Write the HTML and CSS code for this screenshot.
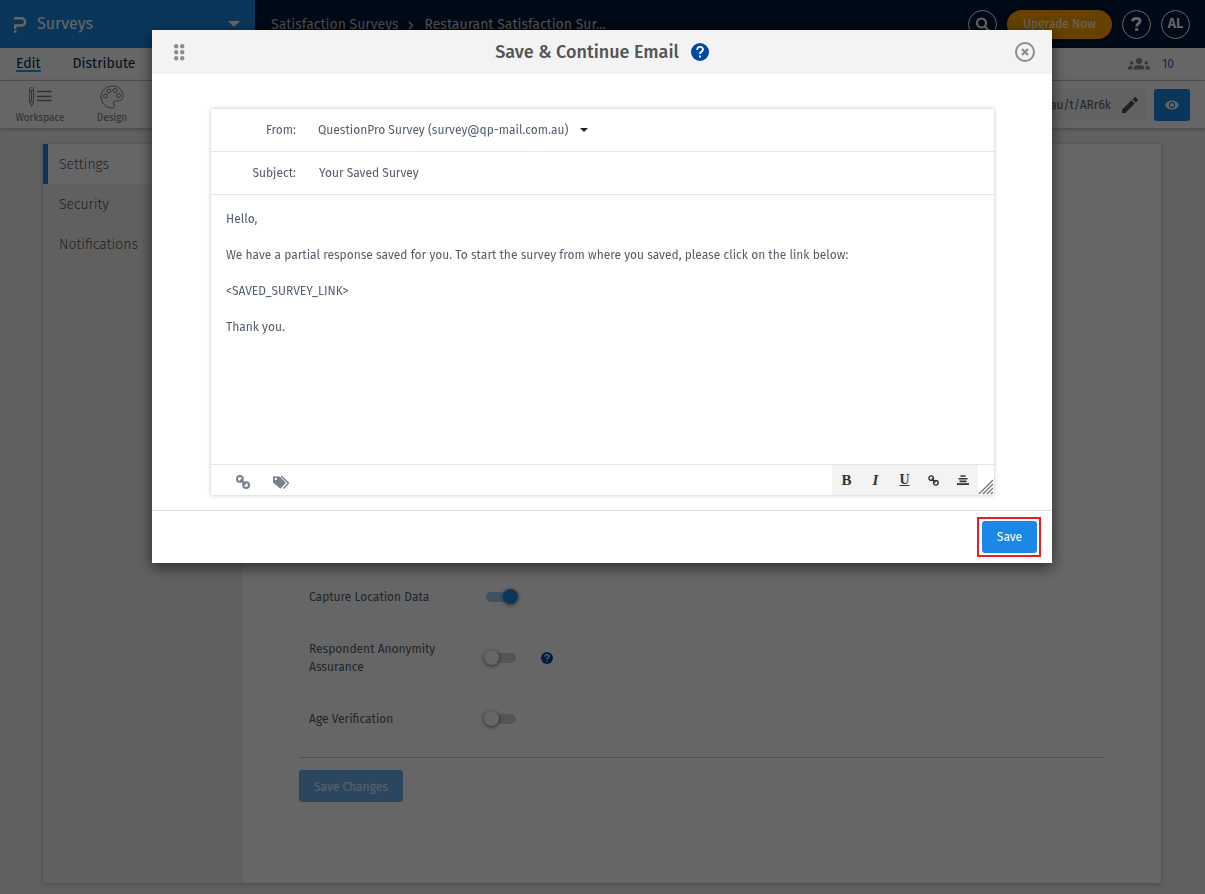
FILE: index.html
```html
<!DOCTYPE html>
<html lang="en">
<head>
    <meta charset="UTF-8">
    <meta name="viewport" content="width=device-width, initial-scale=1.0">
    <title>Surveys - Save &amp; Continue Email</title>
    <link rel="stylesheet" href="styles.css">
</head>
<body>
    <!-- Top bar -->
    <header class="topbar">
        <button class="product-switch" type="button">
            <svg class="logo" width="14" height="17" viewBox="0 0 14 17" fill="none" stroke="#fff" stroke-width="2.400">
                <path d="M1 2.200h7.500a3.300 3.300 0 0 1 0 7.300H2.200V13"/>
                <path d="M1 15.500h2.600"/>
            </svg>
            <span>Surveys</span>
            <svg class="caret" width="12" height="6" viewBox="0 0 12 6"><path d="M0 0h12L6 6z" fill="#fff"/></svg>
        </button>
        <nav class="breadcrumb">
            <a href="#">Satisfaction Surveys</a>
            <svg width="6" height="9" viewBox="0 0 6 9" fill="none" stroke="#c3c8cf" stroke-width="1.5"><path d="M1 1l3.5 3.5L1 8"/></svg>
            <span class="current">Restaurant Satisfaction Sur...</span>
        </nav>
        <div class="top-actions">
            <button class="round" type="button" aria-label="Search">
                <svg width="15" height="15" viewBox="0 0 15 15" fill="none" stroke="#fff"><circle cx="6.500" cy="6" r="4.500" stroke-width="2.200"/><path d="M9.700 9.200l4.300 4.800" stroke-width="2.400"/></svg>
            </button>
            <button class="upgrade" type="button">Upgrade Now</button>
            <button class="round" type="button" aria-label="Help">
                <svg width="11" height="14" viewBox="0 0 11 14" fill="none" stroke="#fff" stroke-width="2.8"><path d="M1.300 4.200C1.600 2.300 3 1.400 5.200 1.400c2.300 0 3.900 1 3.900 2.700 0 2.300-3.500 2.300-3.500 5.400"/><path d="M4.200 12.500h3"/></svg>
            </button>
            <button class="round" type="button">AL</button>
        </div>
    </header>

    <nav class="tabs">
        <a class="active" href="#">Edit</a>
        <a href="#">Distribute</a>
        <a class="viewers" href="#">
            <svg width="22" height="12" viewBox="0 0 22 12" fill="#8a8a8a"><circle cx="11" cy="3" r="3"/><path d="M5.500 11.500V10c0-2 2.500-3 5.500-3s5.500 1 5.500 3v1.500z"/><circle cx="3.700" cy="5" r="1.800"/><path d="M0 11.500V10c0-1.500 1.700-2.200 4.800-2.200-.6.700-.8 1.400-.8 3.700z"/><circle cx="18.300" cy="5" r="1.800"/><path d="M22 11.500V10c0-1.500-1.700-2.200-4.800-2.200.6.700.8 1.400.8 3.700z"/></svg>
            10
        </a>
    </nav>

    <div class="toolbar">
        <a class="tool" href="#">
            <svg width="24" height="24" viewBox="0 0 24 24" fill="none" stroke="#777d87"><path d="M1.500 4.500c0-1.500 1-2 2-2s2 .5 2 2V17l-2 4.500-2-4.500z M1.500 5.500h4 M1.500 17h4 M3.500 6v10"/><path d="M9 6.500h14.500M9 11.500h14.500M9 15.500h14.500" stroke-width="1.500"/></svg>
            Workspace
        </a>
        <a class="tool" href="#">
            <svg width="24" height="24" viewBox="0 0 24 24" fill="none" stroke="#777d87"><path d="M12.500 23C6 23 1 18 1 12S6 1 12.500 1C19 1 23 5.500 23 11c0 3.500-2.500 5-5 5h-2.500c-2 0-2.500 1.500-1.500 3s.5 4-1.500 4z"/><circle cx="5.500" cy="11" r="2"/><circle cx="9" cy="6" r="2"/><circle cx="15" cy="5.500" r="2"/><circle cx="18.500" cy="10.500" r="2"/></svg>
            Design
        </a>
        <div class="survey-link">
            <span>https://www.questionpro.com.au/t/ARr6k</span>
            <svg width="16" height="16" viewBox="0 0 16 16" fill="#50555e"><path d="M0 12.700 9.500 3.200l3.300 3.300L3.300 16H0z M10.500 2.200l1.700-1.700c.6-.6 1.200-.6 1.700 0l1.600 1.600c.6.600.6 1.200 0 1.700l-1.700 1.700z"/></svg>
        </div>
        <button class="preview" type="button" aria-label="Preview">
            <svg width="14" height="10" viewBox="0 0 14 10"><path d="M0 5c1.500-3 4-4.500 7-4.500S12.500 2 14 5c-1.500 3-4 4.500-7 4.500S1.500 8 0 5z" fill="#fff"/><circle cx="7" cy="5" r="2.600" fill="none" stroke="#1b87e6" stroke-width="1.200"/></svg>
        </button>
    </div>

    <!-- Survey settings page -->
    <div class="page">
        <aside class="sidebar">
            <a class="active" href="#">Settings</a>
            <a href="#">Security</a>
            <a href="#">Notifications</a>
        </aside>
        <main class="settings">
            <div class="option">
                <label for="location">Capture Location Data</label>
                <input class="toggle" type="checkbox" id="location" checked>
            </div>
            <div class="option">
                <label for="anonymity">Respondent Anonymity Assurance</label>
                <input class="toggle" type="checkbox" id="anonymity">
                <svg width="12" height="12" viewBox="0 0 18 18"><circle cx="9" cy="9" r="9" fill="#004a9f"/><path d="M6 7c0-4 6-4 6-.5C12 8.500 9 8.500 9 11M9 12.500v2" fill="none" stroke="#fff" stroke-width="1.800"/></svg>
            </div>
            <div class="option">
                <label for="age">Age Verification</label>
                <input class="toggle" type="checkbox" id="age">
            </div>
            <hr>
            <button class="save-changes" type="button">Save Changes</button>
        </main>
    </div>

    <!-- Email dialog -->
    <div class="overlay">
        <form class="modal" role="dialog" aria-labelledby="modal-title">
            <div class="modal-header">
                <svg class="drag" width="11" height="17" viewBox="0 0 11 17" fill="#8c8c8c"><circle cx="2.200" cy="2.200" r="2.200"/><circle cx="8.200" cy="2.200" r="2.200"/><circle cx="2.200" cy="8.200" r="2.200"/><circle cx="8.200" cy="8.200" r="2.200"/><circle cx="2.200" cy="14.200" r="2.200"/><circle cx="8.200" cy="14.200" r="2.200"/></svg>
                <h2 id="modal-title">Save &amp; Continue Email</h2>
                <svg width="18" height="18" viewBox="0 0 18 18"><circle cx="9" cy="9" r="9" fill="#004a9f"/><path d="M6.200 7c0-4 5.800-4 5.800-.5C12 8.500 9 8.500 9 11M9 12.500v2" fill="none" stroke="#fff" stroke-width="1.800"/></svg>
                <button class="close" type="button" aria-label="Close">
                    <svg width="20" height="20" viewBox="0 0 20 20" fill="none" stroke="#8c8c8c"><circle cx="10" cy="10" r="9" stroke-width="2"/><path d="M7 7l6 6M13 7l-6 6" stroke-width="2.200"/></svg>
                </button>
            </div>
            <div class="modal-body">
                <div class="email">
                    <div class="field">
                        <label for="from">From:</label>
                        <select id="from">
                            <option>QuestionPro Survey (survey@qp-mail.com.au)</option>
                        </select>
                        <svg width="8" height="4" viewBox="0 0 8 4"><path d="M0 0h8L4 4z" fill="#222"/></svg>
                    </div>
                    <div class="field">
                        <label for="subject">Subject:</label>
                        <input type="text" id="subject" value="Your Saved Survey">
                    </div>
                    <textarea class="message" aria-label="Message">Hello,

We have a partial response saved for you. To start the survey from where you saved, please click on the link below:

&lt;SAVED_SURVEY_LINK&gt;

Thank you.</textarea>
                    <div class="editor-bar">
                        <div class="inserts">
                            <button type="button" aria-label="Insert link">
                                <svg width="14" height="14" viewBox="0 0 14 14" fill="none" stroke="#76808f" stroke-width="2"><circle cx="3.900" cy="3.900" r="2.900"/><circle cx="10.100" cy="10.100" r="2.900"/><path d="M4.500 4.500l5 5"/></svg>
                            </button>
                            <button type="button" aria-label="Insert tag">
                                <svg width="17" height="13" viewBox="0 0 17 13"><path d="M0 .5h6.500l6.500 6.200-5.700 6L0 6.500z M2.800 1.800a1.200 1.200 0 1 0 .01 0z" fill="#76808f" fill-rule="evenodd"/><path d="M8 .8h1L15.500 7l-5 5.500" fill="none" stroke="#76808f" stroke-width="1.400"/></svg>
                            </button>
                        </div>
                        <div class="format">
                            <button class="bold" type="button">B</button>
                            <button class="italic" type="button">I</button>
                            <button class="underline" type="button">U</button>
                            <button type="button" aria-label="Link">
                                <svg width="11" height="11" viewBox="0 0 14 14" fill="none" stroke="#333" stroke-width="1.800"><circle cx="4" cy="4" r="2.900"/><circle cx="10" cy="10" r="2.900"/><path d="M4.500 4.500l5 5"/></svg>
                            </button>
                            <button type="button" aria-label="Align center">
                                <svg width="12" height="10" viewBox="0 0 12 10" stroke="#333" stroke-width="1.600"><path d="M3.500 1h5M1.500 3.700h9M2.500 6.400h7M0 9.100h12"/></svg>
                            </button>
                        </div>
                        <svg class="grip" width="16" height="16" viewBox="0 0 16 16" stroke="#777" stroke-width="1.300"><path d="M1 15L15 1M5 15L15 5M9 15l6-6M13 15l2-2"/></svg>
                    </div>
                </div>
            </div>
            <div class="modal-footer">
                <div class="highlight">
                    <button class="save" type="button">Save</button>
                </div>
            </div>
        </form>
    </div>
</body>
</html>
```
FILE: styles.css
```css
* {
    box-sizing: border-box;
}
body {
    margin: 0;
    font-family: "Fira Sans", "Noto Sans", sans-serif;
    font-size: 12px;
    line-height: 18px;
    color: #545e6b;
    background-color: #f1f1f1;
}
a {
    color: inherit;
    text-decoration: none;
}
button, input, select, textarea {
    font: inherit;
    color: inherit;
    border: 0;
    margin: 0;
    padding: 0;
    background: none;
}
svg {
    display: block;
    flex-shrink: 0;
}

/* Top bar */
.topbar {
    display: flex;
    align-items: center;
    height: 48px;
    background-color: #001738;
    color: #fff;
}
.product-switch {
    display: flex;
    align-items: center;
    gap: 10px;
    width: 255px;
    height: 48px;
    padding: 0 15px 0 13px;
    background-color: #1b87e6;
    font-size: 16px;
}
.caret {
    margin-left: auto;
}
.breadcrumb {
    display: flex;
    align-items: center;
    gap: 10px;
    padding: 2px 0 0 16px;
    font-size: 14px;
    color: #b4bcc4;
}
.breadcrumb .current {
    color: #c9c9c9;
}
.top-actions {
    display: flex;
    gap: 10px;
    margin-left: auto;
    padding-right: 15px;
}
.round {
    display: flex;
    align-items: center;
    justify-content: center;
    width: 29px;
    height: 29px;
    border: 1px solid #fff;
    border-radius: 50%;
    font-size: 14px;
    font-weight: 600;
}
.upgrade {
    width: 105px;
    height: 29px;
    border-radius: 15px;
    background-color: #ffa400;
}

/* Tabs and tools */
.tabs {
    display: flex;
    align-items: center;
    gap: 32px;
    height: 33px;
    padding: 0 31px 0 16px;
    border-bottom: 1px solid #d0d0d0;
    background-color: #fff;
    color: #00295e;
    font-size: 14px;
}
.tabs .active {
    padding-top: 2px;
    border-bottom: 2px solid #1ba5d6;
    line-height: 12px;
}
.viewers {
    display: flex;
    align-items: center;
    gap: 12px;
    margin-left: auto;
    font-size: 12px;
    color: #2f62c4;
}
.toolbar {
    display: flex;
    align-items: center;
    height: 47px;
    padding: 0 15px 0 4px;
    background-color: #fff;
    box-shadow: 0 1px 4px rgba(0,0,0,0.3);
}
.tool {
    display: flex;
    flex-direction: column;
    align-items: center;
    width: 72px;
    padding-top: 3px;
    font-size: 10px;
    color: #777;
}
.survey-link {
    display: flex;
    align-items: center;
    gap: 11px;
    height: 32px;
    margin: 0 8px 0 auto;
    padding: 0 8px;
    border-radius: 3px;
    background-color: #f5f5f5;
}
.preview {
    display: flex;
    align-items: center;
    justify-content: center;
    width: 36px;
    height: 32px;
    border-radius: 3px;
    background-color: #1b87e6;
}

/* Settings page */
.page {
    display: flex;
    min-height: calc(100vh - 155px);
    margin: 16px 44px 11px 43px;
    background-color: #fff;
    box-shadow: 0 1px 5px rgba(0,0,0,0.25);
}
.sidebar {
    width: 200px;
    background-color: #f1f1f1;
    font-size: 14px;
    font-weight: 300;
    color: #545454;
}
.sidebar a {
    display: block;
    padding: 2px 10px 0 11px;
    border-left: 5px solid transparent;
    line-height: 38px;
}
.sidebar .active {
    border-left-color: #1b87e6;
    background-color: #fff;
}
.settings {
    display: flex;
    flex: 1;
    flex-direction: column;
    justify-content: flex-end;
    align-items: flex-start;
    padding: 0 56px 81px;
}
.option {
    display: flex;
    align-items: center;
    min-height: 36px;
    margin-bottom: 25px;
    padding: 0 10px;
}
.option:nth-of-type(3) {
    margin-bottom: 20px;
}
.option label {
    width: 140px;
    margin-right: 37px;
}
.toggle {
    appearance: none;
    position: relative;
    width: 30px;
    height: 10px;
    margin-right: 25px;
    border-radius: 5px;
    background-color: #d5d5d5;
}
.toggle::before {
    content: "";
    position: absolute;
    top: -3px;
    left: -2px;
    width: 15px;
    height: 15px;
    border-radius: 50%;
    background-color: #fff;
    box-shadow: 0 1px 4px rgba(0,0,0,0.6);
}
.toggle:checked {
    background-color: #9fcdf5;
}
.toggle:checked::before {
    left: 17px;
    background-color: #1b87e6;
}
.settings hr {
    width: 100%;
    margin: 0 0 12px;
    border: 0;
    border-top: 1px solid #c8c8c8;
}
.save-changes {
    height: 32px;
    padding: 2px 15px 0;
    border-radius: 3px;
    background-color: #6cb2f0;
    color: #e2eefa;
}

/* Email dialog */
.overlay {
    position: fixed;
    inset: 0;
    padding: 30px 16px 30px 15px;
    background-color: rgba(0,0,0,0.6);
}
.modal {
    max-width: 900px;
    margin: 0 auto;
    background-color: #fff;
    box-shadow: 0 4px 14px rgba(0,0,0,0.6);
}
.modal-header {
    position: relative;
    display: flex;
    align-items: center;
    justify-content: center;
    gap: 12px;
    height: 44px;
    background-color: #f3f3f3;
}
.modal-header h2 {
    margin: 0;
    font-size: 18px;
    font-weight: 500;
    color: #545454;
}
.drag {
    position: absolute;
    left: 22px;
}
.close {
    position: absolute;
    right: 17px;
}
.modal-body {
    padding: 35px 58px 15px 59px;
}
.email {
    box-shadow: 0 0 4px rgba(0,0,0,0.25);
}
.field {
    display: flex;
    align-items: center;
    height: 43px;
    border-bottom: 1px solid #e5e5e5;
}
.field label {
    width: 85px;
    margin-right: 22px;
    text-align: right;
}
.field select {
    appearance: none;
    margin-right: 11px;
}
.field input {
    flex: 1;
    padding-left: 1px;
}
.message {
    display: block;
    width: 100%;
    height: 270px;
    padding: 15px;
    border-bottom: 1px solid #e5e5e5;
    resize: none;
}
.editor-bar {
    display: flex;
    height: 30px;
}
.inserts {
    display: flex;
    gap: 23px;
    margin-right: auto;
    padding: 4px 25px 0;
}
.format {
    display: flex;
    padding-right: 1px;
    background-color: #f3f3f3;
    color: #333;
}
.format button {
    display: flex;
    align-items: center;
    justify-content: center;
    width: 29px;
    font-family: "Liberation Serif", serif;
    font-size: 15px;
}
.format .bold {
    font-weight: bold;
}
.format .italic {
    font-style: italic;
    font-weight: bold;
}
.format .underline {
    font-weight: bold;
    font-size: 14px;
    text-decoration: underline;
}
.grip {
    align-self: flex-end;
}
.modal-footer {
    display: flex;
    justify-content: flex-end;
    padding: 6px 11px;
    border-top: 1px solid #e0e0e0;
}
.highlight {
    padding: 2px 2px 2px 3px;
    border: 2px solid #ec1c24;
}
.save {
    display: block;
    width: 55px;
    height: 32px;
    border-radius: 3px;
    background-color: #1b87e6;
    color: #fff;
}
```
